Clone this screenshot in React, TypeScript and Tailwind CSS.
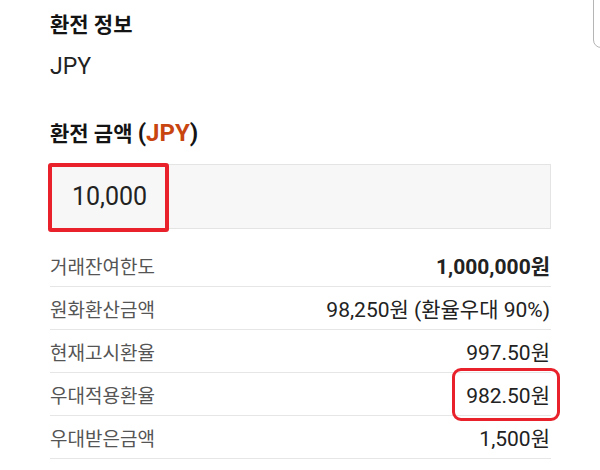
const rows = [
  { label: "거래잔여한도", value: "1,000,000원", bold: true },
  { label: "원화환산금액", value: "98,250원 (환율우대 90%)" },
  { label: "현재고시환율", value: "997.50원" },
  { label: "우대적용환율", value: "982.50원", marked: true },
  { label: "우대받은금액", value: "1,500원" },
];

export default function App() {
  return (
    <div
      className="relative h-[470px] w-[600px] overflow-hidden bg-white"
      style={{ fontFamily: '"Roboto", "Noto Sans CJK KR", sans-serif' }}
    >
      {/* edge of a neighbouring control, cut off at the right */}
      <div className="absolute left-[593px] top-[-10px] h-[58px] w-[30px] rounded-bl-[8px] border border-[#b5b5b5]" />

      <div className="ml-[50px] w-[501px] pt-[10px]">
        <h2 className="text-[21px] font-bold leading-[30px] text-[#141414]">환전 정보</h2>
        <p className="mt-[12px] text-[23px] leading-[30px] text-[#222]">JPY</p>

        <h2 className="mt-[36px] text-[21px] font-bold leading-[30px] text-[#141414]">
          환전 금액 <span className="text-[24px]">(<span className="text-[#c8450f]">JPY</span>)</span>
        </h2>

        <div className="relative mt-[15px] flex h-[65px] items-center border border-[#e4e4e4] bg-[#f7f7f7] pl-[21px]">
          <span className="text-[25px] text-[#222]">10,000</span>
          <div className="absolute left-[-3px] top-[-2px] h-[69px] w-[121px] rounded-[3px] border-4 border-[#e8212b]" />
        </div>

        <div className="mt-[15px]">
          {rows.map((r) => (
            <div
              key={r.label}
              className="flex h-[43px] items-center justify-between border-b border-[#e6e6e6] pt-[6px]"
            >
              <span className="text-[19px] text-[#555]">{r.label}</span>
              <span className={`relative pr-[1px] text-[21px] text-[#222] ${r.bold ? "font-bold" : ""}`}>
                {r.value}
                {r.marked && (
                  <span className="absolute -left-[14px] -right-[9px] -top-[13px] -bottom-[8px] rounded-[9px] border-[3px] border-[#e8212b]" />
                )}
              </span>
            </div>
          ))}
        </div>
      </div>
    </div>
  );
}
